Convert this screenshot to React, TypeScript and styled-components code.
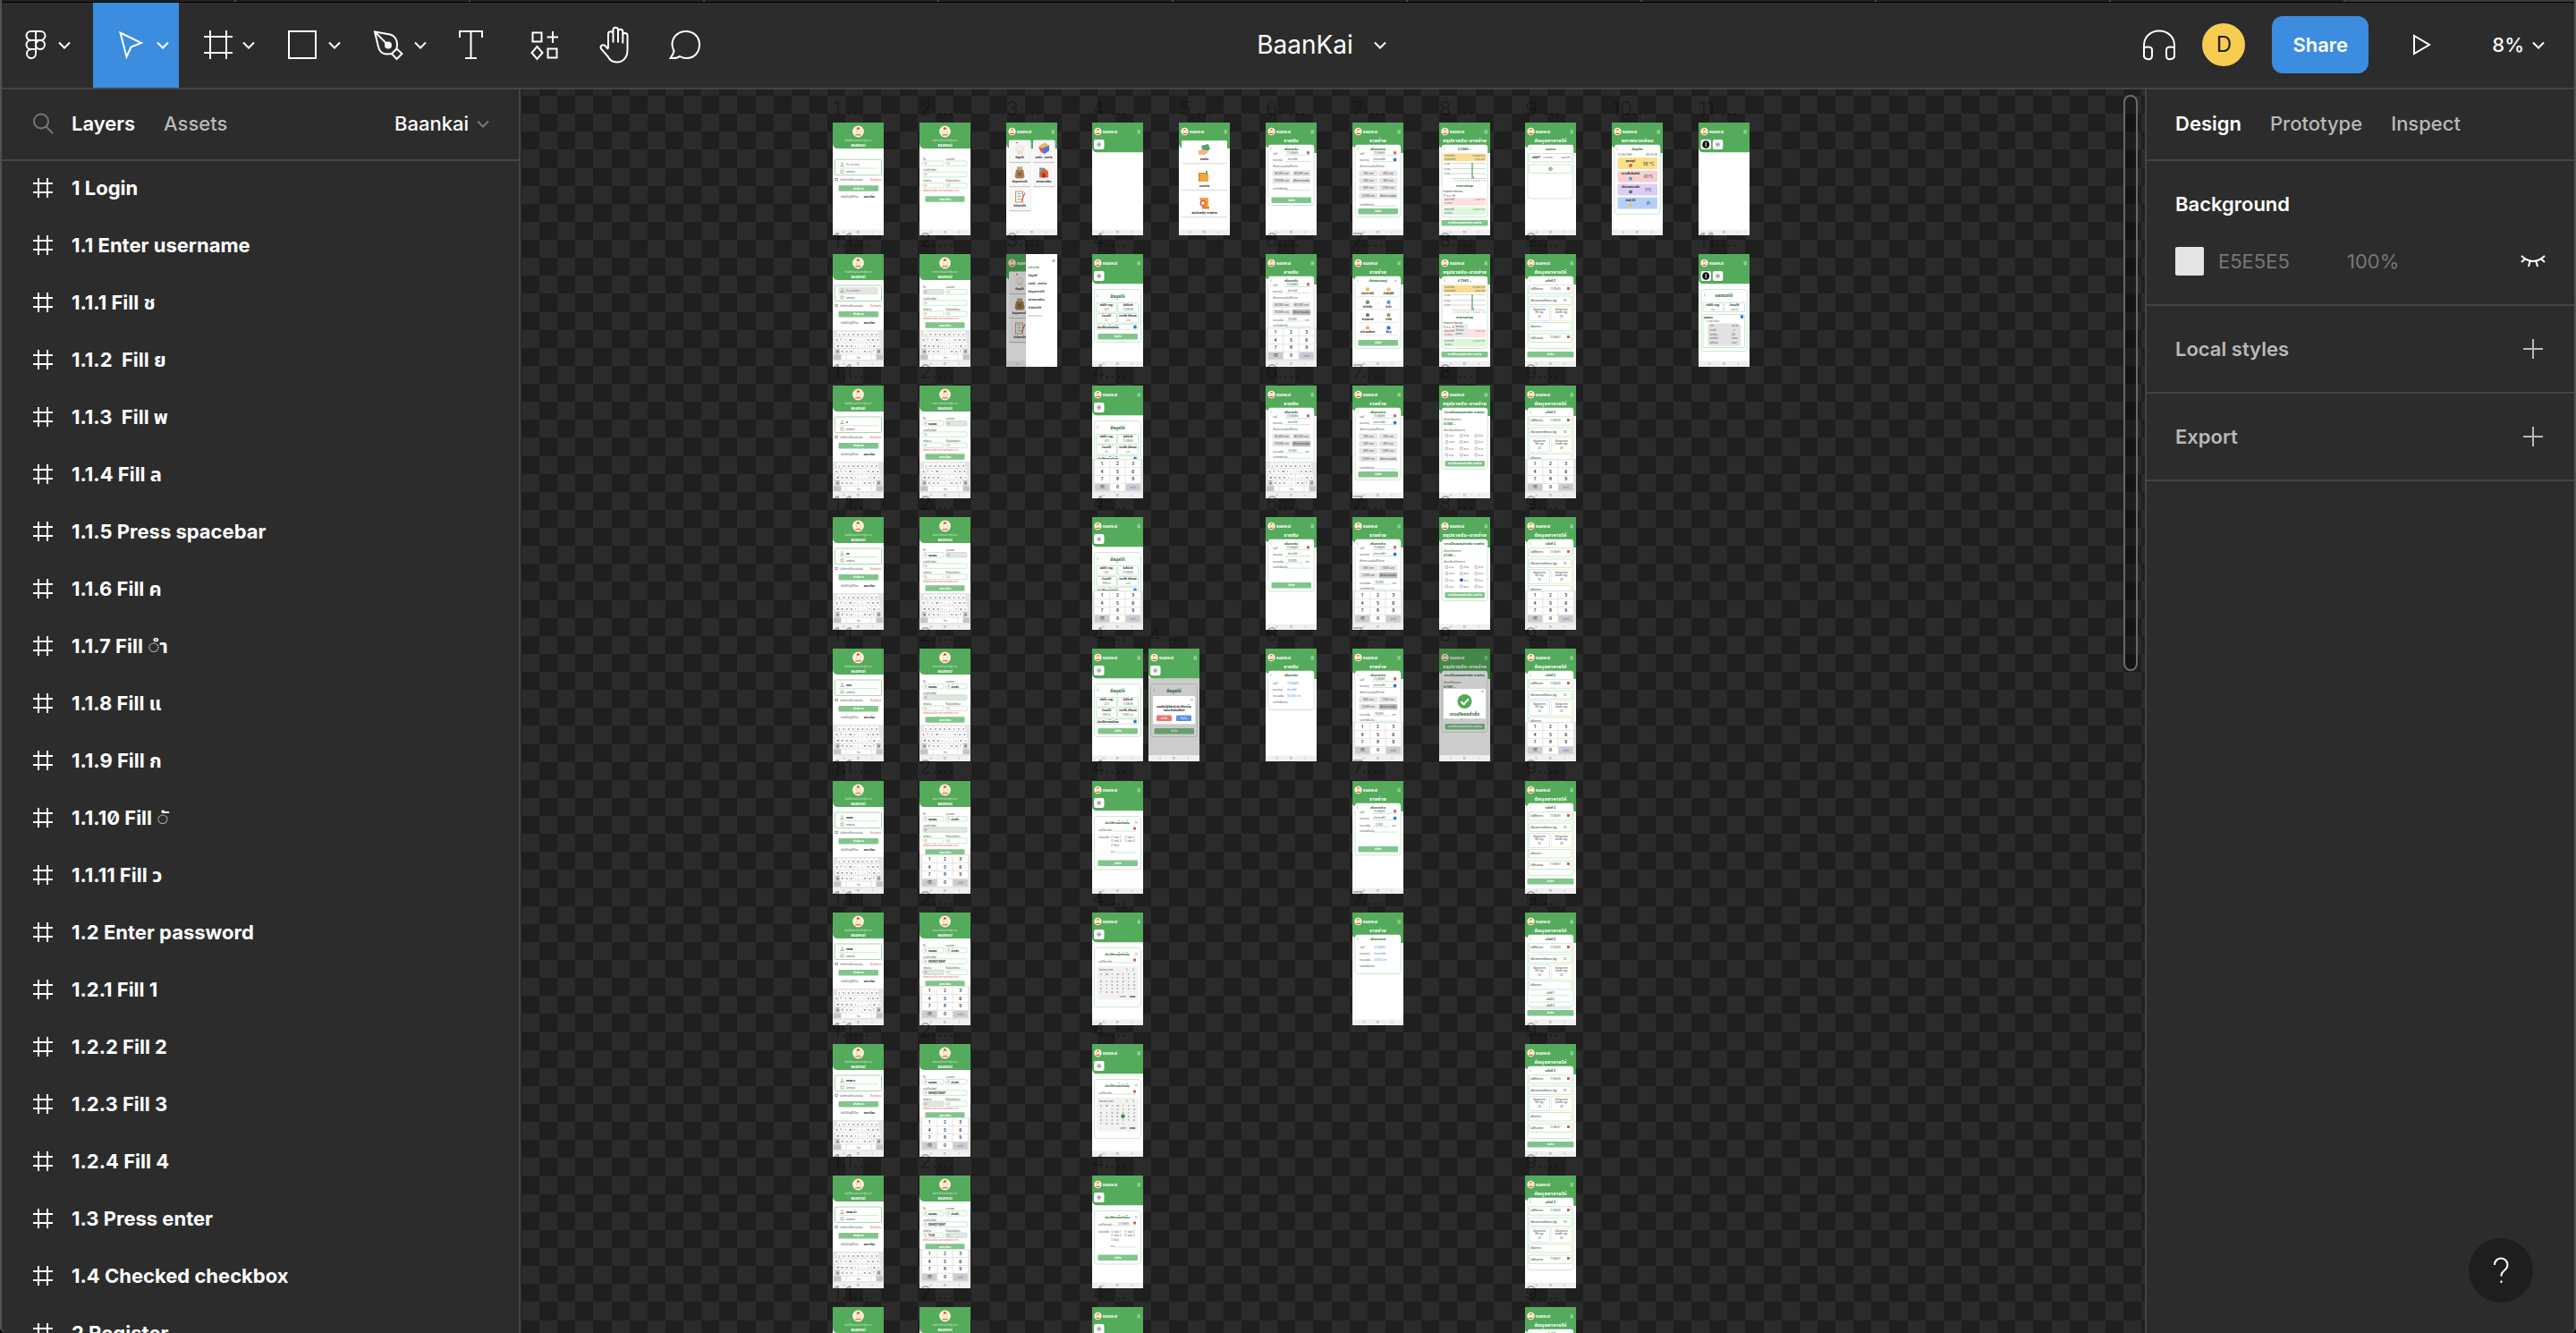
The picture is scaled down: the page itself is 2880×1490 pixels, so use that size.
import React from "react";
import styled, { createGlobalStyle } from "styled-components";

const c = {
  panel: "#2c2c2c",
  line: "#444444",
  dark: "#1e1e1e",
  blue: "#3c8ce0",
  muted: "#b9b9b9",
  faint: "#777777",
  green: "#54ab5b",
  soft: "#80c68b",
  mint: "#b5dfbb",
  deep: "#1f6b35",
};

const GlobalStyle = createGlobalStyle`
  * { box-sizing: border-box; }
  body { margin: 0; background: #000; }
  button, input {
    font: inherit; color: inherit; background: none; border: 0; padding: 0; margin: 0;
  }
  ul { list-style: none; margin: 0; padding: 0; }
`;

const Window = styled.div`
  display: flex;
  flex-direction: column;
  height: 100vh;
  overflow: hidden;
  border: solid #505050;
  border-width: 0 2px;
  border-radius: 0 0 6px 6px;
  background: ${c.panel};
  color: #fff;
  font: 500 22px/32px Inter, "Noto Sans Thai", "Noto Sans", "Liberation Sans", sans-serif;
`;

/* ---------- top bar ---------- */
const TabStrip = styled.div`
  display: flex;
  flex: none;
  height: 3px;
  background: #202020;
  border-bottom: 1px solid #000;
`;
const TabEdge = styled.span`
  flex: 0 0 262px;
  border-right: 2px solid #4a4a4a;
`;
const TabRest = styled.span`
  flex: 1;
  background: #343b3a;
`;
const Toolbar = styled.header`
  display: flex;
  flex: none;
  height: 97px;
  border-bottom: 2px solid ${c.line};
`;
const Side = styled.div<{ $end?: boolean }>`
  display: flex;
  flex: 1;
  align-items: ${(p) => (p.$end ? "center" : "stretch")};
  justify-content: ${(p) => (p.$end ? "flex-end" : "flex-start")};
  padding-bottom: ${(p) => (p.$end ? 1 : 0)}px;
`;
const Tool = styled.button<{ $kind?: "main" | "menu"; $on?: boolean }>`
  display: flex;
  align-items: center;
  gap: ${(p) => (p.$kind === "main" ? 6 : 10)}px;
  width: ${(p) => (p.$kind === "main" ? 102 : p.$kind ? 96 : 80)}px;
  padding: 0 0 1px ${(p) => (p.$kind === "menu" ? 24 : 20)}px;
  background: ${(p) => (p.$on ? c.blue : "transparent")};
`;
const FileName = styled.button`
  display: flex;
  align-items: center;
  gap: 22px;
  padding: 0 0 1px 76px;
  font-size: 28px;
  font-weight: 400;
`;
const PlainButton = styled.button`
  display: flex;
  align-items: center;
  gap: 8px;
`;
const Avatar = styled.span`
  width: 48px;
  height: 48px;
  margin: 0 30px 0 28px;
  border-radius: 50%;
  background: #f7cd51;
  color: #1e1e1e;
  font-size: 24px;
  font-weight: 400;
  line-height: 48px;
  text-align: center;
`;
const Share = styled.button`
  width: 108px;
  height: 64px;
  margin-right: 48px;
  border-radius: 12px;
  background: ${c.blue};
  font-weight: 600;
`;
const ZoomButton = styled(PlainButton)`
  margin: 0 32px 0 66px;
`;

/* ---------- panels ---------- */
const Body = styled.div`
  display: flex;
  flex: 1;
  min-height: 0;
`;
const LeftPanel = styled.aside`
  display: flex;
  flex-direction: column;
  width: 580px;
  flex: none;
  border-right: 2px solid ${c.line};
`;
const LeftHead = styled.div`
  display: flex;
  align-items: center;
  flex: none;
  gap: 20px;
  height: 78px;
  padding: 0 32px 2px 34px;
  box-shadow: 0 2px 0 ${c.line};
`;
const Tab = styled.button<{ $on?: boolean }>`
  font-weight: ${(p) => (p.$on ? 600 : 500)};
  color: ${(p) => (p.$on ? "#fff" : c.muted)};
`;
const TabGroup = styled.div`
  display: flex;
  flex: 1;
  gap: 32px;
`;
const LayerList = styled.ul`
  flex: 1;
  min-height: 0;
  overflow: hidden;
`;
const Layer = styled.li`
  display: flex;
  align-items: center;
  gap: 20px;
  height: 64px;
  padding-left: 34px;
  font-weight: 700;
  font-variant-numeric: slashed-zero;
  white-space: pre;
`;
const RightPanel = styled.aside`
  width: 480px;
  flex: none;
  border-left: 2px solid ${c.line};
`;
const RightTabs = styled.div`
  display: flex;
  align-items: center;
  gap: 32px;
  height: 80px;
  padding: 0 32px 2px;
  border-bottom: 2px solid ${c.line};
`;
const Section = styled.section`
  display: flex;
  flex-direction: column;
  gap: 32px;
  padding: 32px;
  border-bottom: 2px solid ${c.line};
`;
const SectionRow = styled.div`
  display: flex;
  align-items: center;
  height: 32px;
`;
const SectionTitle = styled.h2<{ $dim?: boolean }>`
  flex: 1;
  margin: 0;
  font-size: 22px;
  font-weight: 600;
  color: ${(p) => (p.$dim ? c.muted : "#fff")};
`;
const Swatch = styled.span`
  width: 32px;
  height: 32px;
  margin-right: 16px;
  border-radius: 2px;
  background: #e5e5e5;
`;
const Field = styled.input<{ $grow?: boolean }>`
  width: 144px;
  flex: ${(p) => (p.$grow ? "1" : "none")};
  min-width: 0;
  color: ${c.faint};
  font-weight: 400;
`;
const IconButton = styled.button`
  display: flex;
`;

/* ---------- canvas ---------- */
const Canvas = styled.main`
  position: relative;
  flex: 1;
  min-width: 0;
  overflow: hidden;
`;
const Backdrop = styled.svg`
  display: block;
  width: 100%;
  height: 100%;
`;
const Artboard = styled.figure<{ $x: number; $y: number }>`
  position: absolute;
  left: ${(p) => p.$x}px;
  top: ${(p) => p.$y}px;
  width: 57px;
  margin: 0;
`;
const ArtName = styled.figcaption`
  height: 32px;
  color: rgba(0, 0, 0, 0.3);
  font-weight: 400;
  white-space: nowrap;
`;
const Screen = styled.svg`
  display: block;
  width: 57px;
  height: 126px;
`;
const ScrollThumb = styled.div`
  position: absolute;
  top: 6px;
  right: 8px;
  width: 16px;
  height: 644px;
  border: 2px solid #6a6a6a;
  border-radius: 8px;
  background: rgba(0, 0, 0, 0.3);
`;
const Help = styled.button`
  position: fixed;
  right: 48px;
  bottom: 34px;
  display: flex;
  align-items: center;
  justify-content: center;
  width: 72px;
  height: 72px;
  border-radius: 50%;
  background: ${c.dark};
`;

/* ---------- icons ---------- */
const Glyph = styled.svg<{ $w: number; $h: number }>`
  display: block;
  flex: none;
  width: ${(p) => p.$w}px;
  height: ${(p) => p.$h}px;
  fill: none;
  stroke: currentColor;
  stroke-width: 2;
`;
type IconProps = { w: number; h: number; children: React.ReactNode };
const Icon = ({ w, h, children }: IconProps) => (
  <Glyph $w={w} $h={h} viewBox={`0 0 ${w} ${h}`} aria-hidden="true">
    {children}
  </Glyph>
);
const Chevron = ({ color }: { color?: string }) => (
  <Icon w={16} h={16}>
    <path d="M2 5.5l6 6 6-6" stroke={color} />
  </Icon>
);
const Hash = () => (
  <Icon w={24} h={24}>
    <path d="M7 1v22M17 1v22M1 7h22M1 17h22" />
  </Icon>
);
const Plus = () => (
  <Icon w={28} h={24}>
    <path d="M14 1v22M3 12h22" stroke={c.muted} />
  </Icon>
);
const tools = {
  figma: (
    <path d="M18 3h-5.500a4.900 4.900 0 0 0 0 10H18zM18 3h5.500a4.900 4.900 0 0 1 0 10H18M18 13h-5.500a5 5 0 0 0 0 10H18zM23.500 13a5 5 0 1 1-5.500 5a5 5 0 0 1 5.500-5zM18 23h-5.500a5 5 0 1 0 5.500 5z" />
  ),
  move: <path d="M6.500 4.500l7 27 5-11 11.500-4.500z" />,
  frame: <path d="M11 2v32M29 2v32M4 9h32M4 27h32" />,
  rect: <path d="M3 3h30v30H3z" />,
  pen: (
    <>
      <path d="M3 3.500l17 3c5 1 8 6 8 11l-.5 5 6 5.500-6 6-5.500-6-5 .5c-5 0-9-3-10-8zM3 3.500l13.500 13.500M27.500 22.500l-5.500 5.500" />
      <circle cx="18" cy="18.500" r="3" fill="currentColor" />
    </>
  ),
  text: <path d="M6 10V3h25v7M18.500 3v30M12 33h13" />,
  parts: (
    <path d="M7.500 4.500h10v10h-10zM30 3v13M23.500 9.500H36M24.500 22.500h10v10h-10zM12.500 20l6 7-6 7-6-7z" />
  ),
};

/* ---------- miniature app screens ---------- */
type TProps = { x: number; y: number; s?: number; f?: string; b?: boolean; a?: "middle" | "end"; children: string };
const T = ({ x, y, s = 3, f = "#555", b, a, children }: TProps) => (
  <text x={x} y={y} fontSize={s} fill={f} fontWeight={b ? 700 : 400} textAnchor={a}>
    {children}
  </text>
);
type BProps = { x: number; y: number; w: number; h: number; f?: string; st?: string; r?: number };
const B = ({ x, y, w, h, f = "#fff", st, r = 1 }: BProps) => (
  <rect x={x} y={y} width={w} height={h} rx={r} fill={f} stroke={st} strokeWidth={st ? 0.7 : undefined} />
);
const Btn = ({ x = 6.5, y, w = 44.5, label = "บันทึก" }: { x?: number; y: number; w?: number; label?: string }) => (
  <>
    <B x={x} y={y} w={w} h={6.5} f={c.soft} />
    <T x={x + w / 2} y={y + 4.3} f="#fff" b a="middle">{label}</T>
  </>
);
const Line = ({ x1, x2, y }: { x1: number; x2: number; y: number }) => (
  <path d={`M${x1} ${y}H${x2}`} stroke={c.mint} strokeWidth={0.7} />
);
const Logo = ({ x, r }: { x: number; r: number }) => (
  <g>
    <circle cx={x} cy={10} r={r} fill="#fdf1d8" />
    <circle cx={x} cy={10 - r * 0.45} r={r * 0.28} fill="#dc4a35" />
    <circle cx={x + r * 0.1} cy={10} r={r * 0.4} fill="#fff" stroke="#f2b544" strokeWidth={0.6} />
    <path d={`M${x - r * 0.5} ${10 + r * 0.6}h${r}`} stroke="#dc4a35" strokeWidth={1} />
  </g>
);
const Nav = () => (
  <g>
    <path d="M0 119.500h57v6.500H0z" fill="#f0f0f0" />
    <path d="M12 121.500v2M13.300 121.500v2M44.800 121.300l-1.300 1.200 1.300 1.200" stroke="#999" strokeWidth={0.5} fill="none" />
    <rect x={27.5} y={121.5} width={2.2} height={2} fill="none" stroke="#999" strokeWidth={0.5} />
  </g>
);
const keyRows = ["ๅขชอคตจขช", "ๆไำพะัีรนย", "ฟหกดเ้่าสว", "ผปแอิืทมใฝ"];
const Keyboard = () => (
  <g>
    <path d="M0 85h57v35H0z" fill="#e4e4e4" />
    {keyRows.map((row, i) => {
      const step = i === 0 ? 5.2 : 5.1;
      const start = i === 0 ? 5 : i === 1 ? 2 : 3.2;
      const glyphs = row.replace(/[ัี้่ิื]/g, "-").split("");
      return (
        <g key={i}>
          {glyphs.map((_, k) => (
            <B key={k} x={start + k * step} y={86.5 + i * 6.5} w={4.3} h={5.5} r={0.6} f={i === 3 && (k === 0 || k === 9) ? "#c4c4c4" : "#fff"} />
          ))}
          <text fontSize={3.2} fill="#333" y={90.5 + i * 6.5} x={glyphs.map((_, k) => start + 1.3 + k * step).join(" ")}>
            {glyphs.join("")}
          </text>
        </g>
      );
    })}
    <B x={1} y={112.5} w={8} h={5.5} r={0.6} f="#c4c4c4" />
    <B x={10} y={112.5} w={4.5} h={5.5} r={0.6} />
    <B x={15.5} y={112.5} w={27} h={5.5} r={0.6} />
    <B x={43.5} y={112.5} w={4.5} h={5.5} r={0.6} />
    <B x={49} y={112.5} w={7} h={5.5} r={0.6} f="#c4c4c4" />
    <T x={29} y={116.5} s={2.5} a="middle">ไทย</T>
  </g>
);
const Numpad = () => (
  <g>
    <path d="M0 82h57v38H0z" fill="#e6e6e6" />
    {["1", "2", "3", "4", "5", "6", "7", "8", "9", "⌫", "0", "ถัดไป"].map((n, i) => {
      const x = 3 + (i % 3) * 17.3;
      const y = 83.3 + Math.floor(i / 3) * 8.8;
      const side = i === 9 || i === 11;
      return (
        <g key={n}>
          <B x={x} y={y} w={16.3} h={7.8} f={side ? "#cccccc" : "#fff"} />
          <T x={x + 8.1} y={y + 5.5} s={i === 11 ? 3 : 4.5} f={i === 11 ? "#3b7be0" : "#444"} b={!side} a="middle">{n}</T>
        </g>
      );
    })}
  </g>
);
const Brand = () => (
  <g>
    <Logo x={6.5} r={4.2} />
    <T x={12} y={12} s={4} f="#fff" b>BaanKai</T>
    <path d="M50.500 8.800h3.500M50.500 10.300h3.500M50.500 11.800h3.500" stroke="#d6efd8" strokeWidth={0.7} />
  </g>
);
const GreenTop = ({ h }: { h: number }) => (
  <path d={`M0 0h57v${h}H6q-6 0-6-6z`} fill={c.green} />
);
const AuthTop = ({ line }: { line: string }) => (
  <g>
    <GreenTop h={29} />
    <Logo x={28.5} r={6.4} />
    <T x={28.5} y={21.3} s={3.5} f="#cfe8d0" a="middle">{line}</T>
    <T x={28.5} y={26.5} s={4} f="#fff" b a="middle">BaanKai</T>
  </g>
);

const Login = ({ kbd, fill, focus }: { kbd?: boolean; fill?: string; focus?: boolean }) => {
  const o = kbd ? 0 : 6.3;
  return (
    <g>
      <AuthTop line="ยินดีต้อนรับเข้าสู่ระบบ" />
      <B x={2.5} y={35 + o} w={52} h={17.5} st={c.soft} />
      {focus && <B x={6.5} y={37 + o} w={44} h={7} f="#e4e4e4" />}
      <Line x1={6.5} x2={50.5} y={44.7 + o} />
      <path d={`M8.500 ${42.5 + o}q2-3 4 0zM9 ${47 + o}h3v3h-3z`} fill="none" stroke="#888" strokeWidth={0.6} />
      <circle cx={10.5} cy={39.5 + o} r={1} fill="none" stroke="#888" strokeWidth={0.5} />
      <T x={15} y={42 + o} f={fill ? "#222" : "#777"} b={!!fill}>{fill || "ชื่อ-นามสกุล"}</T>
      <T x={15} y={50 + o}>รหัสผ่าน</T>
      <B x={2.8} y={56.2 + o} w={2.5} h={2.3} st="#777" r={0} />
      <T x={8} y={58.6 + o} s={2.8}>บันทึกการใช้งานของฉัน</T>
      <T x={54.5} y={58.6 + o} s={2.8} f="#e2584d" a="end">ลืมรหัสผ่าน</T>
      <Btn y={64 + o} label="เข้าสู่ระบบ" />
      <T x={9} y={77.8 + o} s={2.8}>ยังไม่มีบัญชีใช่ไหม</T>
      <T x={47} y={77.8 + o} s={2.8} f="#222" b a="end">ลงทะเบียน</T>
      {kbd && <Keyboard />}
    </g>
  );
};
const Register = ({ pad, n = 0 }: { pad?: "kbd" | "num"; n?: number }) => {
  const o = pad ? 0 : 3.5;
  const inputs: [number, number, number, string, string][] = [
    [4, 39.5, 23, "ชื่อ :", "กมลพร"],
    [29.5, 39.5, 23.5, "นามสกุล :", "คำแก้ว"],
    [4, 51.8, 49, "เบอร์โทรศัพท์ :", "0890274697"],
    [4, 64, 23, "รหัสผ่าน :", "1234"],
    [29.5, 64, 23.5, "ยืนยันรหัสผ่าน :", "1234"],
  ];
  return (
    <g>
      <AuthTop line="ลงทะเบียนเข้าสู่ระบบ" />
      {inputs.map(([x, y, w, label, value], i) => (
        <g key={label}>
          <T x={x} y={y - 1.3 + o} s={2.8}>{label}</T>
          <B x={x} y={y + o} w={w} h={5.5} st={c.mint} f={pad && i === n ? "#e4e4e4" : "#fff"} />
          <circle cx={x + 3} cy={y + 2.7 + o} r={1.1} fill="none" stroke="#888" strokeWidth={0.5} />
          {i < n ? <T x={x + 6} y={y + 4 + o} f="#222" b>{value}</T> : null}
        </g>
      ))}
      <T x={4} y={73 + o} s={2.6} f="#e2584d">รหัสผ่านควรมีความยาวอย่างน้อย 8 ตัว</T>
      <Btn x={6.5} y={pad ? 76.3 : 82.3} w={44} label="ลงทะเบียน" />
      {pad === "kbd" && <Keyboard />}
      {pad === "num" && <Numpad />}
    </g>
  );
};
const Farm = (p: { x: number; y: number; kind: number }) => {
  const art = [
    <g key="0"><ellipse cx={0} cy={1} rx={4.5} ry={3.5} fill="#eeeeec" stroke="#ccc" strokeWidth={0.4} /><path d="M-3 0v-5" stroke="#eee" strokeWidth={2} /><path d="M-4-6h2" stroke="#dc4a35" strokeWidth={1.2} /><path d="M-1 4v3M2 4v3" stroke="#e9a13b" strokeWidth={0.7} /></g>,
    <g key="1"><path d="M-6-2l7-4 5 3-7 4z" fill="#f0b64d" /><path d="M-6-1l3 6 4 1-2-6z" fill="#df5868" /><path d="M-1 0l7-3v6l-6 4z" fill="#4778df" /></g>,
    <g key="2"><path d="M-4-3h8l1.500 8-2 2h-7l-2-2z" fill="#a67c52" /><path d="M-3-6h6v3h-6z" fill="#c69c6d" /><path d="M-2 0h4v4h-4z" fill="#886240" /></g>,
    <g key="3"><path d="M-5-1l5-4 5 4v7H-5z" fill="#e0653c" /><path d="M-5-5h4v3h-4z" fill="#4aa3c9" /><path d="M-2 1h4v5h-4z" fill="#a33a22" /></g>,
    <g key="4"><path d="M-5-6h9V7h-9z" fill="#d59555" /><path d="M-4-5h7V6h-7z" fill="#f3f3f3" /><path d="M-2.500-3h4M-2.500 0h4M-2.500 3h4" stroke="#67a7b8" strokeWidth={0.8} /><path d="M2 5l4-9" stroke="#e0653c" strokeWidth={1.2} /></g>,
    <g key="5"><path d="M-3-4l8-2 2 6-8 3z" fill="#51a26e" /><path d="M-6 1l4-1 8 2-5 4h-7z" fill="#f4b584" /></g>,
    <g key="6"><path d="M-6-4h9v10h-9z" fill="#e98a24" /><path d="M-4-3h9v9h-9z" fill="#f6a83c" /><path d="M3-6v4" stroke="#6aac60" strokeWidth={2} /></g>,
    <g key="7"><path d="M-5-6h10v11H-2z" fill="#f2a238" /><circle cx={-1} cy={0} r={3.5} fill="#e55243" /><circle cx={-1} cy={0} r={2} fill="#fff" /><path d="M-2 4h8v2.500h-8z" fill="#d98524" /></g>,
  ];
  return <g transform={`translate(${p.x} ${p.y})`}>{art[p.kind]}</g>;
};
const Menu = ({ open }: { open?: boolean }) => {
  const cards = ["ข้อมูลไก่", "รายรับ - รายจ่าย", "ข้อมูลอาหารไก่", "สภาพแวดล้อม", "กำจัดซากไก่"];
  return (
    <g>
      <GreenTop h={29} />
      <Brand />
      {cards.map((label, i) => {
        const x = i % 2 ? 30 : 3;
        const y = 19.5 + Math.floor(i / 2) * 27;
        return (
          <g key={label}>
            <B x={x} y={y + 0.7} w={24.5} h={25} r={1.5} f="#c9c9c9" />
            <B x={x} y={y} w={24.5} h={24.5} r={1.5} f="#f7f7f7" />
            <Farm x={x + 12} y={y + 9} kind={i} />
            <T x={x + 12} y={y + 20} s={2.8} f="#222" b a="middle">{label}</T>
          </g>
        );
      })}
      <Nav />
      {open && (
        <>
          <path d="M0 0h22v126H0z" fill="#000" fillOpacity={0.2} />
          <path d="M22 0h35v126H22z" fill="#fff" />
          <path d="M51.500 6l3 3M54.500 6l-3 3" stroke="#333" strokeWidth={0.6} />
          <T x={24.5} y={15.5} s={3.5} f={c.green} b>หน้าหลัก</T>
          {["ข้อมูลไก่", "รายรับ - รายจ่าย", "ข้อมูลอาหารไก่", "สภาพแวดล้อม", "กำจัดซากไก่", "ออกจากระบบ"].map((t, i) => (
            <T key={t} x={24.5} y={25 + i * 9} f={i === 5 ? "#999" : "#333"} b={i < 5}>{t}</T>
          ))}
        </>
      )}
    </g>
  );
};
const Money = () => (
  <g>
    <GreenTop h={29} />
    <Brand />
    {["รายรับ", "รายจ่าย", "สรุปรายรับ-รายจ่าย"].map((t, i) => (
      <g key={t}>
        <B x={3} y={20.7 + i * 30} w={51} h={25.5} f="#dedede" r={1.5} />
        <B x={3} y={20 + i * 30} w={51} h={25} r={1.5} />
        <Farm x={28} y={30 + i * 30} kind={5 + i} />
        <T x={28.5} y={41.5 + i * 30} s={3.5} f="#222" b a="middle">{t}</T>
      </g>
    ))}
  </g>
);
const TileTop = ({ two }: { two?: boolean }) => (
  <g>
    <GreenTop h={33.2} />
    <Brand />
    {two && (
      <>
        <B x={2.5} y={19} w={11.5} h={11} r={2} />
        <ellipse cx={8.2} cy={24.5} rx={4} ry={4.3} fill="#111" />
        <path d="M8.200 22v5" stroke="#fff" strokeWidth={1} />
      </>
    )}
    <B x={two ? 15.8 : 2} y={19} w={11.5} h={11} r={2} />
    <circle cx={two ? 21.5 : 7.7} cy={24.5} r={1.9} fill="none" stroke="#555" strokeWidth={0.6} />
    <path d={`M${two ? 20.5 : 6.7} 24.500h2M${two ? 21.5 : 7.7} 23.500v2`} stroke="#555" strokeWidth={0.6} />
  </g>
);
const Chicken = ({ pad, n = 0, dialog }: { pad?: boolean; n?: number; dialog?: boolean }) => (
  <g>
    <TileTop />
    <B x={2.5} y={39.5} w={52} h={59} st={c.mint} r={3} />
    <path d="M7 45l-1.500 1.500L7 48" stroke="#777" strokeWidth={0.5} fill="none" />
    <T x={28.5} y={49} s={4.8} f={c.deep} b a="middle">ข้อมูลไก่</T>
    {[["รหัสไก่ (Tag)", "U21"], ["วันที่นำเข้า", "17/08/65"], ["จำนวนไก่", n ? "500 ตัว" : "ตัว"], ["ราคาซื้อ (ทั้งหมด)", n > 1 ? "7500 บาท" : "บาท"]].map(([a, v], i) => {
      const x = i % 2 ? 28.7 : 4.7;
      const y = i < 2 ? 54.5 : 66.5;
      return (
        <g key={a}>
          <B x={x} y={y} w={22.8} h={10.5} st={c.mint} />
          <T x={x + 11.4} y={y + 3.5} s={2.7} f="#222" b a="middle">{a}</T>
          <T x={x + 11.4} y={y + 8.8} s={2.8} a="middle">{v}</T>
        </g>
      );
    })}
    <B x={4.7} y={78.7} w={47} h={5.5} st={c.mint} />
    <T x={6} y={82.5} s={3} f="#222" b>ประวัติการฉีดวัคซีน</T>
    <circle cx={48} cy={81.5} r={1.9} fill="#2f76e3" />
    <Btn y={89} />
    {pad && <Numpad />}
    {dialog && (
      <>
        <path d="M0 33.200h57v86.300H0z" fill="#000" fillOpacity={0.2} />
        <B x={4.7} y={53} w={47.5} h={31.5} r={1.5} />
        <path d="M47.500 56l2 2M49.500 56l-2 2" stroke="#555" strokeWidth={0.5} />
        <T x={28.5} y={65.5} s={3} f="#222" b a="middle">คุณต้องไปยังหน้าประวัติการฉีด</T>
        <T x={28.5} y={69.5} s={3} f="#222" b a="middle">วัคซีน ยืนยันหรือไม่</T>
        <B x={9} y={74.5} w={17} h={6.5} f="#ee7273" />
        <T x={17.5} y={78.8} s={2.8} f="#fff" a="middle">ยกเลิก</T>
        <B x={31} y={74.5} w={17} h={6.5} f="#5b90e6" />
        <T x={39.5} y={78.8} s={2.8} f="#fff" a="middle">ยืนยัน</T>
      </>
    )}
  </g>
);
const DateMark = ({ x, y }: { x: number; y: number }) => <B x={x} y={y} w={3} h={3} f="#d5605b" r={0.3} />;
const Vaccine = ({ cal, picked, date }: { cal?: boolean; picked?: boolean; date?: boolean }) => (
  <g>
    <TileTop />
    <B x={2.5} y={39.5} w={52} h={cal ? 66 : 59.5} st={c.mint} r={3} />
    <T x={28} y={47.5} s={3.5} f={c.deep} b a="middle">ประวัติการฉีดวัคซีน</T>
    <path d="M48 45l2.500 2.500M50.500 45L48 47.500" stroke="#777" strokeWidth={0.5} />
    <T x={7} y={56}>วันที่ฉีดวัคซีน</T>
    <Line x1={24} x2={49} y={56} />
    <DateMark x={46} y={51.5} />
    {date && <T x={29} y={55}>17/08/65</T>}
    {cal ? (
      <g>
        <B x={5.5} y={60} w={46} h={37.5} f="#f2f2f2" r={2} />
        <T x={8} y={64.5} s={2.6}>สิงหาคม 2565</T>
        <path d="M39.500 62.500l-1.500 1.200 1.500 1.200M45.500 62.500l1.500 1.200-1.500 1.200" fill="none" stroke="#666" strokeWidth={0.5} />
        {picked && <circle cx={34.5} cy={80.7} r={2.3} fill="#2f9648" />}
        {["SMTWTFS", "  12345", "6789012", "3456789", "0123456", "78901  "].map((r, i) => (
          <text key={i} fontSize={2.6} fill="#555" y={70 + i * 4} x={r.split("").map((_, k) => 9 + k * 6.2).join(" ")} xmlSpace="preserve">{r}</text>
        ))}
        <T x={31} y={94.5} s={2.6}>ยกเลิก</T>
        <T x={42} y={94.5} s={2.6} f="#222" b>ตกลง</T>
      </g>
    ) : (
      <g>
        <T x={7} y={64}>ชนิดวัคซีน</T>
        <T x={21} y={64}>○ ชนิด 1</T>
        <T x={36} y={64}>○ ชนิด 2</T>
        <T x={21} y={68.3}>○ ชนิด 3</T>
        <T x={36} y={68.3}>○ ชนิด 4</T>
        <T x={21} y={72.5}>○ อื่นๆ</T>
        <T x={21} y={79.5}>ระบุ</T>
        <Line x1={26} x2={49} y={80} />
        <Btn y={88.5} />
      </g>
    )}
  </g>
);
const Sheet = ({ title, sub, end, children }: { title: string; sub: string; end: number; children: React.ReactNode }) => (
  <g>
    <path d="M0 0h57v34h-4V28H3.500q-3.500 0-3.500-3z" fill={c.green} />
    <Brand />
    <T x={28.5} y={22} s={6} f="#fff" b a="middle">{title}</T>
    <B x={3} y={26} w={51} h={end - 26} r={3} st={c.mint} />
    <B x={3} y={24.8} w={51} h={10} r={2.5} />
    <path d="M6.500 28.500L5.300 29.700l1.200 1.200" stroke="#777" strokeWidth={0.5} fill="none" />
    <T x={28.5} y={31} s={3.5} f={c.deep} b a="middle">{sub}</T>
    {children}
  </g>
);
const FieldRow = ({ y, label, value, mark, unit }: { y: number; label: string; value?: string; mark?: "date" | "dot"; unit?: boolean }) => (
  <g>
    <T x={8} y={y}>{label}</T>
    {value && <T x={30} y={y - 0.8} a="middle" f="#444">{value}</T>}
    <Line x1={22} x2={unit ? 42 : 50} y={y + 0.6} />
    {mark === "date" && <DateMark x={46} y={y - 3.5} />}
    {mark === "dot" && <circle cx={47.5} cy={y - 1.5} r={1.9} fill="#2f76e3" />}
    {unit && <T x={44} y={y}>บาท</T>}
  </g>
);
const Pills = ({ items, on }: { items: string[]; on?: boolean }) => (
  <g>
    <T x={8} y={50}>เลือกจำนวนเงินที่ใช้บ่อย</T>
    {items.map((t, i) => {
      const last = i === items.length - 1;
      const x = i % 2 ? 29.5 : 7.5;
      const y = 53.5 + Math.floor(i / 2) * 8.3;
      return (
        <g key={t}>
          <B x={x} y={y} w={20.8} h={6.5} f={last && on ? "#bdbdbd" : "#e6e6e6"} />
          <T x={x + 10.4} y={y + 4.3} f="#333" a="middle">{t}</T>
        </g>
      );
    })}
  </g>
);
const incomePills = ["50,000 บาท", "60,000 บาท", "70,000 บาท", "เลือกจำนวนเงิน"];
const costPills = ["100 บาท", "200 บาท", "300 บาท", "400 บาท", "500 บาท", "1,000 บาท", "2,000 บาท", "เลือกจำนวนเงิน"];
const Ledger = ({ cost, step }: { cost?: boolean; step: "form" | "num" | "kbd" | "filled" | "done" }) => {
  const title = cost ? "รายจ่าย" : "รายรับ";
  const sub = cost ? "เพิ่มรายจ่าย" : "เพิ่มรายรับ";
  if (step === "done") {
    return (
      <Sheet title={title} sub={sub} end={68.5}>
        {[["วันที่ :", "17/08/65"], ["หมวดหมู่ :", cost ? "ค่าอาหารไก่" : "ค่าขายไก่"], ["จำนวนเงิน :", cost ? "2,000 บาท" : "10,000 บาท"], ["บันทึกเพิ่มเติม :", "-"]].map(([a, v], i) => (
          <g key={a}>
            <T x={8} y={39.5 + i * 7}>{a}</T>
            <T x={i === 3 ? 30 : 24} y={39.5 + i * 7} f="#3b7be0">{v}</T>
          </g>
        ))}
      </Sheet>
    );
  }
  const filled = step === "filled";
  const end = filled ? 83 : step === "form" ? (cost ? 105.5 : 92.5) : 122;
  const noteY = filled ? 56.5 : step === "form" ? (cost ? 92.5 : 75) : 80.5;
  const pills = cost ? (step === "form" ? costPills : costPills.slice(4)) : incomePills;
  return (
    <Sheet title={title} sub={sub} end={end}>
      <FieldRow y={35.8} label="วันที่" value="17/08/65" mark="date" />
      <FieldRow y={43} label="หมวดหมู่" value={cost ? "ค่าอาหารไก่" : "ค่าขายไก่"} mark={cost ? "dot" : undefined} />
      {!filled && <Pills items={pills} on={step !== "form"} />}
      {filled && <FieldRow y={50.5} label="จำนวนเงิน" value={cost ? "2,000" : "10,000"} unit />}
      {(step === "num" || step === "kbd") && <FieldRow y={74.5} label="จำนวนเงิน" value="10,000" unit />}
      <FieldRow y={noteY} label="บันทึกเพิ่มเติม" />
      {step === "form" && <Btn y={cost ? 96 : 83.5} />}
      {filled && <Btn y={73} />}
      {step === "num" && <Numpad />}
      {step === "kbd" && <Keyboard />}
    </Sheet>
  );
};
const Categories = () => (
  <Sheet title="รายจ่าย" sub="เลือกหมวดหมู่" end={105.5}>
    <path d="M47 28.500l2.500 2.500M49.500 28.500L47 31" stroke="#777" strokeWidth={0.5} />
    {["ค่าอาหารไก่", "ค่าพันธุ์ไก่", "ค่าวัคซีน", "ค่าน้ำ", "ค่าอุปกรณ์", "ค่าไฟ", "ค่าบำรุงรักษา", "อื่นๆ"].map((t, i) => {
      const x = i % 2 ? 29.5 : 6;
      const y = 35.5 + Math.floor(i / 2) * 14.3;
      const hue = ["#f3bb4d", "#f0c15c", "#6f8f73", "#5c9fd0", "#6b7d6b", "#b98f55", "#e7ae75", "#2f76e3"][i];
      return (
        <g key={t}>
          <B x={x} y={y + 0.6} w={22} h={12} f="#e2e2e2" r={1.5} />
          <B x={x} y={y} w={22} h={11.8} r={1.5} />
          <circle cx={x + 11} cy={y + 4} r={2.2} fill={hue} />
          <T x={x + 11} y={y + 9.8} f="#222" b a="middle">{t}</T>
        </g>
      );
    })}
    <Btn y={96} />
  </Sheet>
);
const Summary = ({ open }: { open?: boolean }) => (
  <Sheet title="สรุปรายรับ-รายจ่าย" sub="ปี 2565 ⌄" end={105.5}>
    <B x={4.5} y={34.5} w={48} h={8.5} f="#f9dd94" />
    <T x={6} y={37.8} s={2.6}>รายรับทั้งปี</T>
    <T x={51} y={37.8} s={2.6} a="end">50,000 บาท</T>
    <T x={6} y={41.8} s={2.6}>รายจ่ายทั้งปี</T>
    <T x={51} y={41.8} s={2.6} a="end">1,550 บาท</T>
    <path d="M14 45.500h38M14 51.500h38M14 57h38M14 62.500h38" stroke="#bbb" strokeWidth={0.6} />
    <path d="M37 45v17.500" stroke="#4fa65a" strokeWidth={1.3} />
    <path d="M38.500 60.500v2" stroke="#dc4a35" strokeWidth={0.9} />
    <T x={5} y={46.5} s={2.3}>75,000</T>
    <T x={5} y={52.5} s={2.3}>50,000</T>
    <T x={5} y={58} s={2.3}>25,000</T>
    <text fontSize={2.3} fill="#666" y={65.5} x="17 20 23 26 29 32 35 38 41 44 47 50">123456789012</text>
    <T x={28.5} y={72.3} s={3.5} f={c.deep} b a="middle">รายการล่าสุด</T>
    <T x={4.5} y={77.5} f="#333">ล่าสุดจาก สิงหาคม</T>
    <T x={4.5} y={82.5}>17 ส.ค. 65</T>
    <B x={4.5} y={84} w={48} h={9} f="#fbe3e3" r={0.5} />
    <T x={6} y={87} s={2.5}>ค่าอาหารไก่</T>
    <T x={6} y={91.3} s={2.5}>13:45 น.</T>
    <T x={51} y={87} s={2.5} f="#e2584d" a="end">-1,500 บาท</T>
    <B x={4.5} y={94.5} w={48} h={9} f="#dcf8dc" r={0.5} />
    <T x={6} y={97.5} s={2.5}>ยอดขายไก่</T>
    <T x={6} y={101.8} s={2.5}>10:00 น.</T>
    <T x={51} y={97.5} s={2.5} f="#43a04c" a="end">+10,000 บาท</T>
    {open && <B x={17} y={78.5} w={15.5} h={13} f="#e9e9e9" />}
    {open && <T x={18.5} y={82} s={2.6}>สิงหาคม</T>}
    {open && <T x={18.5} y={86} s={2.6}>กันยายน</T>}
    {open && <T x={18.5} y={90} s={2.6}>ตุลาคม</T>}
    <Btn x={2.5} w={52} y={109} label="ดาวน์โหลดสรุปรายรับ-รายจ่าย" />
  </Sheet>
);
const months = ["ม.ค.", "ก.พ.", "มี.ค.", "เม.ย.", "พ.ค.", "มิ.ย.", "ก.ค.", "ส.ค.", "ก.ย.", "ต.ค.", "พ.ย.", "ธ.ค."];
const Download = ({ on, done }: { on?: boolean; done?: boolean }) => (
  <g>
    <Sheet title="สรุปรายรับ-รายจ่าย" sub="ดาวน์โหลดสรุปรายรับ-รายจ่าย" end={93.5}>
      <T x={5} y={38.5}>เลือกปีที่ต้องการ</T>
      <T x={5} y={43.8} f={c.deep} b>ปี 2565 ⌄</T>
      <T x={5} y={51}>เลือกเดือนที่ต้องการ</T>
      {months.map((m, i) => {
        const x = 7 + (i % 3) * 16.5;
        const y = 54.5 + Math.floor(i / 3) * 7.2;
        return (
          <g key={m}>
            <B x={x} y={y} w={2.8} h={2.8} st={on && i === 7 ? "#1f57d8" : "#999"} f={on && i === 7 ? "#1f57d8" : "#fff"} r={0.5} />
            <T x={x + 4.3} y={y + 2.7}>{m}</T>
          </g>
        );
      })}
      <Btn y={84} label="ดาวน์โหลดสรุปรายรับ-รายจ่าย" />
    </Sheet>
    {done && (
      <>
        <path d="M0 0h57v119.500H0z" fill="#000" fillOpacity={0.2} />
        <B x={5} y={45} w={47} h={33.5} r={1.5} />
        <path d="M47.500 46.800l2 2M49.500 46.800l-2 2" stroke="#555" strokeWidth={0.5} />
        <circle cx={28.5} cy={59} r={8} fill="#55a855" />
        <path d="M24.500 59.200l3 3 5.500-6" fill="none" stroke="#fff" strokeWidth={2} />
        <T x={28.5} y={74.5} s={4.8} f={c.deep} b a="middle">ดาวน์โหลดสำเร็จ</T>
      </>
    )}
  </g>
);
const Feed = ({ step }: { step: "list" | "form" | "num" | "drop" | "view" }) => (
  <Sheet title="ข้อมูลอาหารไก่" sub={step === "list" ? "รายการ" : "ครั้งที่ 2"} end={step === "list" ? 85 : step === "num" ? 122 : 105.5}>
    {step === "list" ? (
      <g>
        <B x={4.5} y={34.5} w={47.5} h={9.5} st={c.mint} r={0.5} />
        <T x={8} y={40.3} f="#222" b>ครั้งที่ 1</T>
        <T x={20} y={40.3} s={2.6}>17/08/65</T>
        <T x={50} y={40.3} s={2.6} a="end">อนุบาลไก่</T>
        <B x={4.5} y={47} w={47.5} h={9.5} st={c.mint} r={0.5} />
        <circle cx={28.5} cy={51.7} r={1.9} fill="none" stroke="#555" strokeWidth={0.6} />
        <path d="M27.500 51.700h2M28.500 50.700v2" stroke="#555" strokeWidth={0.6} />
      </g>
    ) : (
      <g>
        <B x={4.5} y={34.7} w={47.5} h={9.5} st={c.mint} r={0.5} />
        <T x={6} y={40.3} s={2.8} f="#222">วันที่ให้อาหาร</T>
        <T x={28} y={39.5} s={2.8}>17/08/65</T>
        <DateMark x={47} y={37} />
        <B x={4.5} y={47} w={47.5} h={9.5} st={c.mint} r={0.5} />
        <T x={6} y={52.8} s={2.8} f="#222">ปริมาณอาหารทั้งหมด (kg)</T>
        <T x={43} y={52.8} s={2.8}>50</T>
        <B x={4.5} y={58.5} w={23} h={16} st="#ccd8f8" r={0.5} />
        <B x={29.5} y={58.5} w={22.5} h={16} st="#fbe8b4" r={0.5} />
        <T x={16} y={62.5} s={2.6} f="#333" a="middle">ปริมาณอาหาร</T>
        <T x={16} y={65.8} s={2.6} f="#333" a="middle">ที่ให้ (kg)</T>
        <T x={16} y={71.3} s={2.8} a="middle">20</T>
        <T x={40.7} y={62.5} s={2.6} f="#333" a="middle">ปริมาณอาหาร</T>
        <T x={40.7} y={65.8} s={2.6} f="#333" a="middle">คงเหลือ (kg)</T>
        <T x={40.7} y={71.3} s={2.8} a="middle">30</T>
        <B x={4.5} y={76.5} w={47.5} h={9.5} st={c.mint} r={0.5} />
        <T x={6} y={82.3} s={2.8} f="#222">ชนิดอาหาร</T>
        {step !== "drop" && (
          <>
            <B x={4.5} y={89} w={47.5} h={9.5} st={c.mint} r={0.5} />
            <T x={6} y={94.8} s={2.8} f="#222">วันที่หมดอายุ</T>
            <T x={28} y={94} s={2.8}>17/08/67</T>
            <DateMark x={47} y={91} />
          </>
        )}
        {step === "drop" && ["ชนิดที่ 1", "ชนิดที่ 2", "ชนิดที่ 3"].map((t, i) => (
          <g key={t}>
            <T x={28.5} y={91 + i * 7.2} s={2.8} f="#222" a="middle">{t}</T>
            <Line x1={6} x2={51} y={92.8 + i * 7.2} />
          </g>
        ))}
        {(step === "form" || step === "drop") && <Btn x={2.5} w={52} y={109} />}
        {step === "num" && <Numpad />}
      </g>
    )}
  </Sheet>
);
const Climate = () => (
  <Sheet title="สภาพแวดล้อม" sub="ฝั่งภูเก็ต" end={102.5}>
    <T x={6.5} y={37.3} s={3}>17/08/2565</T>
    <T x={51} y={37.3} s={3} a="end">09:00:00</T>
    {[["อุณหภูมิ", "38 °C", "#fbe08a", "#d8604f"], ["ความชื้นสัมพัทธ์", "60%", "#f7cfcf", "#4aa3d9"], ["ปริมาณฝนเฉลี่ย", "0%", "#dccdf8", "#5d6b86"], ["ดัชนี UV", "ต่ำ", "#b4d0fa", "#f3c53c"]].map(([a, v, bg, dot], i) => (
      <g key={a}>
        <B x={6.5} y={39 + i * 14.8} w={44.5} h={13} f={bg} />
        <T x={21} y={43.5 + i * 14.8} s={3} f="#222" b a="middle">{a}</T>
        <circle cx={21} cy={48 + i * 14.8} r={2} fill={dot} />
        <T x={41} y={47.5 + i * 14.8} s={4.8} f="#444" a="middle">{v}</T>
      </g>
    ))}
  </Sheet>
);
const Scan = () => (
  <g>
    <TileTop two />
    <B x={3} y={39.5} w={51} h={69} st={c.mint} r={3} />
    <path d="M7.500 44.500L6 46l1.500 1.500" stroke="#777" strokeWidth={0.5} fill="none" />
    <T x={28.5} y={47.5} s={4.3} f={c.deep} b a="middle">ผลตรวจไก่</T>
    <B x={5} y={54.5} w={22.5} h={10} st={c.mint} r={0.5} />
    <B x={29} y={54.5} w={22.5} h={10} st={c.mint} r={0.5} />
    <T x={16} y={58} s={2.7} f="#222" b a="middle">รหัสไก่ (Tag)</T>
    <T x={40} y={58} s={2.7} f="#222" b a="middle">จำนวนไก่</T>
    <T x={16} y={63} s={2.7} a="middle">U21</T>
    <T x={40} y={63} s={2.7} a="middle">500 ตัว</T>
    <B x={5} y={67.5} w={46.5} h={37} st={c.mint} r={0.5} />
    <T x={6} y={71.5} s={2.8} f="#222" b>ผลตรวจ</T>
    <circle cx={48.5} cy={70} r={1.9} fill="#2f76e3" />
    <T x={9} y={75.8} s={2.6}>17/08/2565</T>
    <B x={10.5} y={77.5} w={36.5} h={25} f="#e2e2e2" r={1.5} />
    {["เวลา", "น้ำหนัก", "โรคที่พบ", "แหล่งที่มา", "วันสิ้นสุด"].map((t, i) => (
      <g key={t}>
        <T x={12.5} y={81 + i * 4.8} s={2.6}>{t}</T>
        <T x={37} y={81 + i * 4.8} s={2.6}>{["09:28", "- 0", "ไม่มี", "สงขลา", "3461"][i]}</T>
      </g>
    ))}
  </g>
);

type Frame = { col: number; row: number; name: string; art: React.ReactNode; dx?: number; bare?: boolean };
const frames: Frame[] = [];
const add = (col: number, row: number, name: string, art: React.ReactNode, extra: Partial<Frame> = {}) =>
  frames.push({ col, row, name, art, ...extra });

const typed = ["", "", "ช", "ชย", "ชยพ", "ชยพล", "ชยพล", "ชยพล ค", "ชยพล คำ", "ชยพล คำ"];
typed.forEach((t, r) => add(0, r, r ? "1.1..." : "1 ...", <Login kbd={r > 0} fill={t} focus={r === 1} />));
for (let r = 0; r < 10; r++) {
  const n = [0, 0, 1, 1, 2, 2, 3, 3, 4, 4][r];
  add(1, r, r ? "2...." : "2 ...", <Register pad={r === 0 ? undefined : r < 5 ? "kbd" : "num"} n={n} />);
}
add(2, 0, "3 ...", <Menu />);
add(2, 1, "3....", <Menu open />, { bare: true });
add(3, 0, "4 ...", <TileTop />);
add(3, 1, "4....", <Chicken />);
add(3, 2, "4....", <Chicken pad />);
add(3, 3, "4....", <Chicken pad n={1} />);
add(3, 4, "4....", <Chicken n={2} />);
add(3, 4, "4....", <Chicken n={2} dialog />, { dx: 63 });
add(3, 5, "4....", <Vaccine />);
add(3, 6, "4....", <Vaccine cal />);
add(3, 7, "4....", <Vaccine cal picked />);
add(3, 8, "4....", <Vaccine date />);
add(3, 9, "4....", <Chicken />);
add(4, 0, "5 ...", <Money />);
(["form", "num", "kbd", "filled", "done"] as const).forEach((s, r) =>
  add(5, r, r ? "6...." : "6. ...", <Ledger step={s} />),
);
add(6, 0, "7 ...", <Ledger cost step="form" />);
add(6, 1, "7....", <Categories />);
(["form", "num", "num", "filled", "done"] as const).forEach((s, i) => add(6, i + 2, "7....", <Ledger cost step={s} />));
add(7, 0, "8 ...", <Summary />);
add(7, 1, "8....", <Summary open />);
add(7, 2, "8....", <Download />);
add(7, 3, "8....", <Download on />);
add(7, 4, "8....", <Download done />);
(["list", "form", "num", "num", "num", "form", "drop", "form", "view", "form"] as const).forEach((s, r) =>
  add(8, r, r ? "9...." : "9 ...", <Feed step={s} />),
);
add(9, 0, "10...", <Climate />);
add(10, 0, "11 ...", <TileTop two />);
add(10, 1, "11....", <Scan />);

const colX = (col: number) => Math.round(349 + col * 96.8);
const rowY = (row: number) => Math.round(37 + row * 147.1);

/* One repeat of the checkerboard: 16 × 16 cells over 322px, so cells stay on whole pixels. */
const REPEAT = 322;
const edge = (i: number) => Math.round((i * REPEAT) / 16);
const cells = Array.from({ length: 256 }, (_, i) => [i % 16, Math.floor(i / 16)])
  .filter(([x, y]) => (x + y) % 2 === 1)
  .map(([x, y]) => `M${edge(x)} ${edge(y)}H${edge(x + 1)}V${edge(y + 1)}H${edge(x)}z`)
  .join("");

const layers = [
  "1 Login", "1.1 Enter username", "1.1.1 Fill ช", "1.1.2  Fill ย", "1.1.3  Fill พ", "1.1.4 Fill ล",
  "1.1.5 Press spacebar", "1.1.6 Fill ค", "1.1.7 Fill ◌ำ", "1.1.8 Fill แ", "1.1.9 Fill ก", "1.1.10 Fill ◌ั",
  "1.1.11 Fill ว", "1.2 Enter password", "1.2.1 Fill 1", "1.2.2 Fill 2", "1.2.3 Fill 3", "1.2.4 Fill 4",
  "1.3 Press enter", "1.4 Checked checkbox", "2 Register",
];

export default function App() {
  return (
    <Window>
      <GlobalStyle />
      <TabStrip>
        {Array.from({ length: 10 }, (_, i) => (
          <TabEdge key={i} />
        ))}
        <TabRest />
      </TabStrip>
      <Toolbar>
        <Side>
          <Tool $kind="main" aria-label="Main menu">
            <Icon w={36} h={36}>{tools.figma}</Icon>
            <Chevron />
          </Tool>
          <Tool $kind="menu" $on aria-label="Move">
            <Icon w={36} h={36}>{tools.move}</Icon>
            <Chevron />
          </Tool>
          <Tool $kind="menu" aria-label="Frame">
            <Icon w={36} h={36}>{tools.frame}</Icon>
            <Chevron />
          </Tool>
          <Tool $kind="menu" aria-label="Rectangle">
            <Icon w={36} h={36}>{tools.rect}</Icon>
            <Chevron />
          </Tool>
          <Tool $kind="menu" aria-label="Pen">
            <Icon w={36} h={36}>{tools.pen}</Icon>
            <Chevron />
          </Tool>
          <Tool aria-label="Text">
            <Icon w={36} h={36}>{tools.text}</Icon>
          </Tool>
          <Tool aria-label="Resources">
            <Icon w={38} h={36}>{tools.parts}</Icon>
          </Tool>
          <Tool aria-label="Hand">
            <Icon w={38} h={42}>
              <path d="M12 25V9a2.500 2.500 0 0 1 5.500 0v9.500V4.500a2.700 2.700 0 0 1 5.500 0v14V6.500a2.600 2.600 0 0 1 5.300 0v13V10.500a2.500 2.500 0 0 1 5.200 0V27c0 8.500-5 13.500-12 13.500-5 0-8-2.500-10-6.500L4 25.500c-1.500-3 1.500-5.500 4.500-3.500L12 26" />
            </Icon>
          </Tool>
          <Tool aria-label="Comment">
            <Icon w={36} h={36}>
              <path d="M18.500 3C28 3 34 9.500 34 18s-6 15-14.500 15c-3 0-5-.5-7.500-2l-3 1.500c-2 .7-5 .5-7.500.5 2-2.500 3.500-5 4-8C4 22 3.500 20 3.500 18 3.500 9.500 10 3 18.500 3z" />
            </Icon>
          </Tool>
        </Side>
        <FileName>
          BaanKai
          <Chevron />
        </FileName>
        <Side $end>
          <IconButton aria-label="Audio">
            <Icon w={40} h={36}>
              <path d="M3 32V19C3 9 10.500 2.500 20 2.500S37 9 37 19v13M3 21q9-2 9 3v6q0 5-5 4-4-.5-4-4zM37 21q-9-2-9 3v6q0 5 5 4 4-.5 4-4z" />
            </Icon>
          </IconButton>
          <Avatar>D</Avatar>
          <Share>Share</Share>
          <IconButton aria-label="Present">
            <Icon w={24} h={24}>
              <path d="M3 2v20l17-10z" />
            </Icon>
          </IconButton>
          <ZoomButton>
            8%
            <Chevron />
          </ZoomButton>
        </Side>
      </Toolbar>
      <Body>
        <LeftPanel>
          <LeftHead>
            <IconButton aria-label="Search">
              <Icon w={24} h={24}>
                <circle cx="10" cy="9.500" r="8" stroke={c.faint} />
                <path d="M15.500 15.500l7.500 7.500" stroke={c.faint} />
              </Icon>
            </IconButton>
            <TabGroup>
              <Tab $on>Layers</Tab>
              <Tab>Assets</Tab>
            </TabGroup>
            <PlainButton>
              Baankai
              <Chevron color={c.faint} />
            </PlainButton>
          </LeftHead>
          <LayerList>
            {layers.map((name) => (
              <Layer key={name}>
                <Hash />
                {name}
              </Layer>
            ))}
          </LayerList>
        </LeftPanel>
        <Canvas>
          <Backdrop aria-hidden="true">
            <defs>
              <pattern id="checker" x={21} y={7} width={REPEAT} height={REPEAT} patternUnits="userSpaceOnUse">
                <path d={`M0 0h${REPEAT}v${REPEAT}H0z`} fill="#2b2b2b" />
                <path d={cells} fill="#1f1f1f" shapeRendering="crispEdges" />
              </pattern>
            </defs>
            <rect width="100%" height="100%" fill="url(#checker)" />
          </Backdrop>
          {frames.map((f, i) => (
            <Artboard key={i} $x={colX(f.col) + (f.dx || 0)} $y={rowY(f.row) - 32}>
              <ArtName>{f.name}</ArtName>
              <Screen viewBox="0 0 57 126">
                <path d="M0 0h57v126H0z" fill="#fff" />
                {f.art}
                {!f.bare && <Nav />}
              </Screen>
            </Artboard>
          ))}
          <ScrollThumb />
        </Canvas>
        <RightPanel>
          <RightTabs>
            <Tab $on>Design</Tab>
            <Tab>Prototype</Tab>
            <Tab>Inspect</Tab>
          </RightTabs>
          <Section>
            <SectionTitle>Background</SectionTitle>
            <SectionRow>
              <Swatch />
              <Field aria-label="Background colour" defaultValue="E5E5E5" />
              <Field $grow aria-label="Background opacity" defaultValue="100%" />
              <IconButton aria-label="Show background">
                <Icon w={28} h={16}>
                  <path d="M1 2q13 12 26 0M5 5.500L1 9M10.500 8L9 14M17.500 8l1.500 6M23 5.500L27 9" />
                </Icon>
              </IconButton>
            </SectionRow>
          </Section>
          <Section>
            <SectionRow>
              <SectionTitle $dim>Local styles</SectionTitle>
              <IconButton aria-label="Add local style">
                <Plus />
              </IconButton>
            </SectionRow>
          </Section>
          <Section>
            <SectionRow>
              <SectionTitle $dim>Export</SectionTitle>
              <IconButton aria-label="Add export">
                <Plus />
              </IconButton>
            </SectionRow>
          </Section>
        </RightPanel>
      </Body>
      <Help aria-label="Help">
        <Icon w={24} h={30}>
          <path d="M5 9a7.200 7.200 0 1 1 12.500 4.500c-2 2.500-5 3.500-5 7v1M12.500 26.500v2.500" />
        </Icon>
      </Help>
    </Window>
  );
}
